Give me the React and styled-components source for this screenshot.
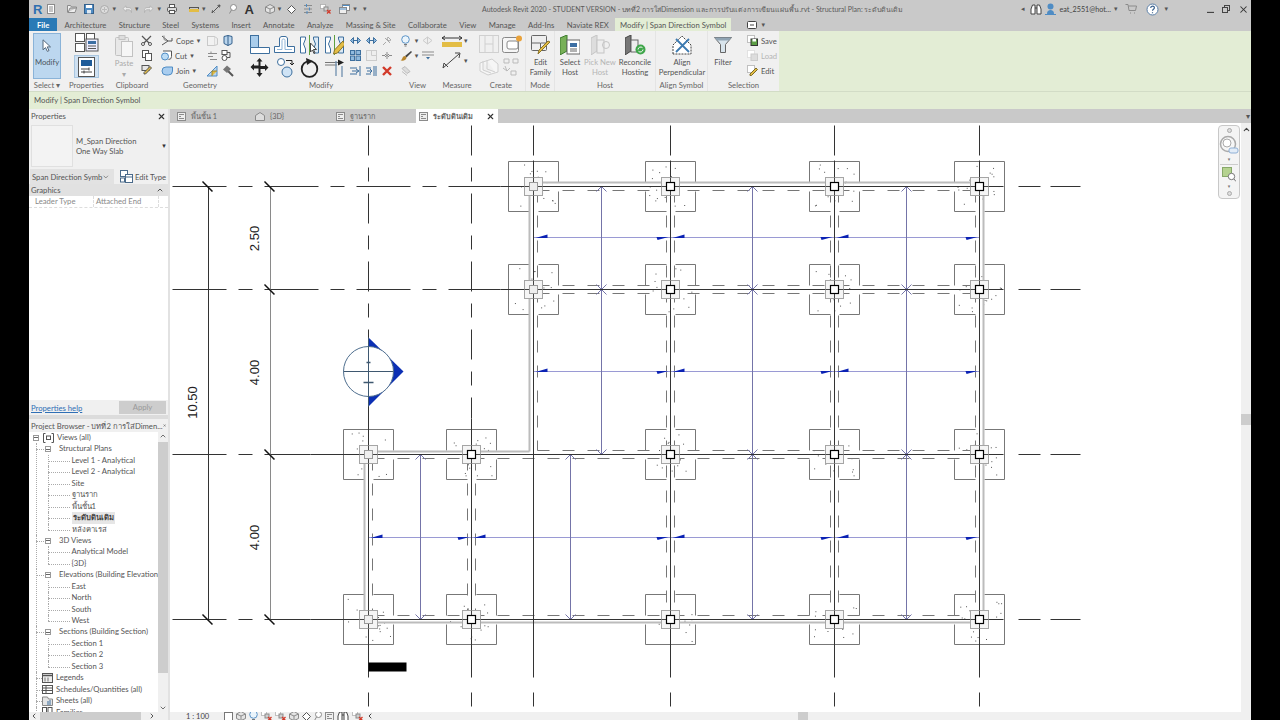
import React from 'react';
import styled, { createGlobalStyle } from 'styled-components';
import { X, ChevronUp, ChevronDown, ChevronLeft, ChevronRight } from 'lucide-react';

const Global = createGlobalStyle`
  html, body { margin: 0; background: #000; }
  * { box-sizing: border-box; }
  body { font-family: Lato, "Open Sans", "Noto Sans", sans-serif; color: #555; }
`;

const Page = styled.div`
  width: 1280px;
  height: 720px;
  background: #000;
  display: flex;
  justify-content: center;
  overflow: hidden;
`;
const Win = styled.div`
  width: 1222px;
  height: 720px;
  display: flex;
  flex-direction: column;
  background: #c9c9c9;
  font-size: 7.7px;
`;

/* ---------- title bar ---------- */
const TitleBar = styled.div`
  height: 18px;
  display: flex;
  align-items: center;
  flex: none;
`;
const Qat = styled.div`
  width: 453px;
  padding-left: 4px;
  display: flex;
  align-items: center;
  flex: none;
`;
const QatItem = styled.span`
  margin-left: ${p => p.$ml || 0}px;
  display: flex;
  align-items: center;
  line-height: 1;
`;
const RLogo = styled.span`
  font: 700 13px "Liberation Sans", sans-serif;
  color: ${p => p.$c || '#2f6fb0'};
`;
const Caret = styled.span`
  font: 7px "DejaVu Sans", sans-serif;
  color: ${p => p.$c || '#555'};
  margin-left: ${p => p.$ml || 0}px;
`;
const Title = styled.div`
  color: #5a5a5a;
  white-space: nowrap;
  font-size: 7px;
`;
const UserArea = styled.div`
  margin-left: auto;
  display: flex;
  align-items: center;
  gap: 3px;
  color: #444;
  padding-right: 2px;
`;
const UserName = styled.span`
  font-size: 7.2px;
  white-space: nowrap;
`;
const WinBtns = styled.div`
  display: flex;
  align-items: center;
  gap: 8px;
  margin-left: 36px;
`;

/* ---------- ribbon ---------- */
const TabBar = styled.div`
  height: 13px;
  display: flex;
  align-items: stretch;
  flex: none;
`;
const RTab = styled.div`
  padding: 0 ${p => p.$px ?? 6.2}px;
  margin-right: ${p => p.$mr ?? 0}px;
  display: flex;
  align-items: center;
  white-space: nowrap;
  color: ${p => (p.$file ? '#fff' : '#555')};
  background: ${p => (p.$file ? '#2a7ab6' : p.$active ? '#e3edd5' : 'transparent')};
  font-weight: ${p => (p.$file ? 700 : 400)};
`;
const Ribbon = styled.div`
  height: 61px;
  flex: none;
  display: flex;
  background: #e3edd5;
  border-bottom: 1px solid #d2dcc6;
`;
const Panel = styled.div`
  width: ${p => p.$w}px;
  height: 60px;
  background: #f0f0f0;
  display: flex;
  flex-direction: column;
  border-right: ${p => (p.$sep ? '1px solid #e4e4e4' : 'none')};
`;
const PanelBody = styled.div`
  height: 48px;
  padding: 2px 0 0 0;
  display: flex;
  gap: ${p => p.$gap || 0}px;
  flex: none;
`;
const PanelLabel = styled.div`
  height: 12px;
  line-height: 13px;
  text-align: center;
  white-space: nowrap;
  color: #666;
`;
const ModifyBtn = styled.div`
  width: 28px;
  height: 46px;
  margin-left: 4px;
  background: #bcd7ef;
  border: 1px solid #8ab3d8;
  display: flex;
  flex-direction: column;
  align-items: center;
  gap: 5px;
  padding-top: 5px;
  color: #4b5560;
`;
const PropsCol = styled.div`
  display: flex;
  flex-direction: column;
  align-items: center;
  gap: 3px;
  width: 100%;
`;
const PropsActive = styled.div`
  width: 25px;
  height: 23px;
  background: #cfe1f2;
  border: 1px solid #a9c6e0;
  display: flex;
  align-items: center;
  justify-content: center;
`;
const PasteBtn = styled.div`
  width: 22px;
  margin: 2px 0 0 5px;
  display: flex;
  flex-direction: column;
  align-items: center;
  gap: 2px;
  color: #aaa;
  line-height: 9px;
`;
const SmallGrid = styled.div`
  display: grid;
  grid-template-columns: repeat(${p => p.$cols}, ${p => p.$cw || 15}px);
  grid-auto-rows: 15px;
  align-items: center;
  justify-items: center;
  margin-left: ${p => p.$ml || 0}px;
`;
const GeomRow = styled.div`
  display: flex;
  align-items: center;
  gap: 3px;
  height: 15px;
  color: #555;
  white-space: nowrap;
`;
const GeomCol = styled.div`
  display: flex;
  flex-direction: column;
  width: 43px;
  margin-left: 5px;
  flex: none;
`;
const BigGrid = styled.div`
  display: grid;
  grid-template-columns: repeat(4, 25px);
  grid-template-rows: 23px 23px;
  align-items: center;
  justify-items: center;
  margin-left: 3px;
`;
const BigStack = styled.div`
  display: flex;
  flex-direction: column;
  gap: 5px;
  margin: 2px 0 0 ${p => p.$ml || 2}px;
`;
const WithCaret = styled.div`
  display: flex;
  align-items: center;
  gap: 2px;
`;
const BigTool = styled.div`
  width: ${p => p.$w}px;
  display: flex;
  flex-direction: column;
  align-items: center;
  text-align: center;
  line-height: 10px;
  color: ${p => (p.$off ? '#b5b5b5' : '#555')};
  white-space: nowrap;
  flex: none;
`;
const BigIconBox = styled.div`
  height: 24px;
  display: flex;
  align-items: center;
`;
const SelCol = styled.div`
  display: flex;
  flex-direction: column;
  margin-left: 9px;
`;
const SelRow = styled.div`
  display: flex;
  align-items: center;
  gap: 3px;
  height: 15px;
  color: ${p => (p.$off ? '#b5b5b5' : '#555')};
`;
const ContextBar = styled.div`
  height: 17px;
  flex: none;
  background: #e3edd5;
  display: flex;
  align-items: center;
  padding: 0 0 1px 5px;
  color: #555;
`;

/* ---------- main area ---------- */
const Main = styled.div`
  flex: 1;
  min-height: 0;
  display: flex;
  gap: 2px;
  background: #e2e2e2;
`;
const Side = styled.div`
  width: 139px;
  flex: none;
  display: flex;
  flex-direction: column;
  background: #f0f0f0;
  overflow: hidden;
`;
const PaneHeader = styled.div`
  height: ${p => p.$h || 14}px;
  display: flex;
  align-items: center;
  justify-content: space-between;
  padding: 0 2px;
  flex: none;
  white-space: nowrap;
  color: #555;
  background: #f0f0f0;
`;
const TypeBox = styled.div`
  height: 46px;
  display: flex;
  align-items: center;
  padding-left: 2px;
  gap: 3px;
  line-height: 10px;
`;
const Preview = styled.div`
  width: 42px;
  height: 42px;
  border: 1px solid #e0e0e0;
  background: #f3f3f3;
  flex: none;
`;
const TypeName = styled.div`
  flex: 1;
`;
const SelectRow = styled.div`
  height: 15px;
  display: flex;
  align-items: center;
  gap: 2px;
  padding-left: 1px;
  white-space: nowrap;
`;
const SelectBox = styled.div`
  width: 84px;
  height: 15px;
  margin-right: 4px;
  background: #e2e2e2;
  padding: 0 4px 0 2px;
  display: flex;
  align-items: center;
  justify-content: space-between;
  white-space: nowrap;
`;
const GroupHead = styled.div`
  height: 12px;
  background: #e1e1e1;
  display: flex;
  align-items: center;
  justify-content: space-between;
  padding: 0 4px 0 2px;
  color: #555;
`;
const ParamRow = styled.div`
  height: 12px;
  display: grid;
  grid-template-columns: 65px 65px 9px;
  background: #fff;
  border-bottom: 1px dashed #ddd;
  color: #888;
`;
const ParamCell = styled.span`
  padding-left: ${p => p.$pl}px;
  border-right: 1px dashed #ddd;
  line-height: 11px;
`;
const PropsBlank = styled.div`
  height: 192px;
  background: #fff;
`;
const ApplyRow = styled.div`
  height: 15px;
  display: flex;
  align-items: center;
  justify-content: space-between;
  padding: 0 2px;
`;
const HelpLink = styled.a`
  color: #2f6fb5;
  text-decoration: underline;
`;
const ApplyBtn = styled.div`
  width: 47px;
  height: 13px;
  background: #cdcdcd;
  color: #999;
  text-align: center;
  line-height: 12px;
`;
const BrowserGap = styled.div`
  height: 4px;
  background: #dcdcdc;
  flex: none;
`;
const BrowserBody = styled.div`
  flex: 1;
  min-height: 0;
  display: flex;
  background: #fff;
  position: relative;
  overflow: hidden;
`;
const TreeWrap = styled.div`
  width: 129px;
  padding-left: 2px;
  overflow: hidden;
  flex: none;
`;
const Ul = styled.ul`
  list-style: none;
  margin: 0 0 0 ${p => p.$ml}px;
  padding: 0;
`;
const Li = styled.li`
  position: relative;
  color: #555;
  &::before {
    content: '';
    position: absolute;
    left: 0;
    top: 0;
    height: 100%;
    border-left: 1px dotted #aaa;
  }
  &:last-child::before { height: 6px; }
`;
const Row = styled.div`
  height: 11.45px;
  line-height: 11.45px;
  display: flex;
  align-items: center;
  white-space: nowrap;
  position: relative;
  &::before {
    content: '';
    position: absolute;
    left: 0;
    top: 6px;
    width: ${p => p.$stub}px;
    border-top: 1px dotted #aaa;
  }
`;
const Expander = styled.span`
  width: 6px;
  height: 6px;
  margin: 0 ${p => p.$mr ?? 8}px 0 ${p => p.$ml}px;
  border: 1px solid #999;
  background: #fff;
  position: relative;
  flex: none;
  z-index: 1;
  &::after {
    content: '';
    position: absolute;
    left: 0;
    top: 1.5px;
    width: 4px;
    border-top: 1px solid #666;
  }
`;
const RowIcon = styled.span`
  margin: 0 3px 0 ${p => p.$ml}px;
  display: flex;
  flex: none;
  z-index: 1;
  background: #fff;
`;
const RowText = styled.span`
  margin-left: ${p => p.$ml || 0}px;
  padding: 0 ${p => (p.$sel ? 1 : 0)}px;
  font-weight: ${p => (p.$sel ? 700 : 400)};
  background: ${p => (p.$sel ? '#e6e6e6' : 'transparent')};
  color: ${p => (p.$sel ? '#444' : '#555')};
`;
const VScroll = styled.div`
  width: 10px;
  background: #f0f0f0;
  display: flex;
  flex-direction: column;
  align-items: center;
  color: #555;
  flex: none;
`;
const VThumb = styled.div`
  width: 10px;
  height: ${p => p.$h}px;
  margin: ${p => p.$mt}px 0 auto;
  background: #cdcdcd;
  flex: none;
`;
const HScroll = styled.div`
  height: 8px;
  flex: none;
  background: #f0f0f0;
  display: flex;
  align-items: center;
  padding: 0 12px 0 1px;
`;
const HThumb = styled.div`
  width: 101px;
  height: 8px;
  margin: 0 auto 0 2px;
  background: #cdcdcd;
`;

const Content = styled.div`
  flex: 1;
  min-width: 0;
  display: flex;
  flex-direction: column;
`;
const ViewTabs = styled.div`
  height: 14px;
  flex: none;
  display: flex;
  padding-left: 1px;
  background: #c9c9c9;
  position: relative;
`;
const ViewTab = styled.div`
  width: ${p => p.$w}px;
  margin-left: ${p => p.$ml || 0}px;
  padding-left: ${p => (p.$active ? 3 : 6)}px;
  display: flex;
  align-items: center;
  gap: 5px;
  background: ${p => (p.$active ? '#fff' : 'transparent')};
  color: #666;
  white-space: nowrap;
  font-size: 7.3px;
  font-weight: ${p => (p.$active ? 700 : 400)};
`;
const TabClose = styled.span`
  margin-left: auto;
  margin-right: 3px;
  display: flex;
  color: #333;
`;
const TabsMenu = styled.span`
  position: absolute;
  right: 1px;
  top: 3px;
  font: 8px "DejaVu Sans", sans-serif;
  color: #555;
`;
const CanvasRow = styled.div`
  flex: 1;
  min-height: 0;
  display: flex;
`;
const Canvas = styled.div`
  flex: 1;
  background: #fff;
  position: relative;
  overflow: hidden;
`;
const PlanSvg = styled.svg`
  display: block;
`;
const NavBar = styled.div`
  position: absolute;
  top: 2px;
  right: 1px;
  width: 22px;
  height: 74px;
  border: 1px solid #c8c8c8;
  border-radius: 4px;
  background: #f4f4f4;
  display: flex;
  flex-direction: column;
  align-items: center;
  justify-content: space-between;
  padding: 2px 0;
`;
const NavDot = styled.span`
  width: 5px;
  height: 5px;
  border-radius: 50%;
  border: 1px solid #aaa;
  background: #ddd;
`;
const NavDivider = styled.span`
  width: 18px;
  border-top: 1px solid #ccc;
`;
const NavCaret = styled.span`
  font: 5px "DejaVu Sans", sans-serif;
  color: #777;
  line-height: 5px;
`;
const RightScroll = styled.div`
  width: 10px;
  background: #f0f0f0;
  display: flex;
  flex-direction: column;
  align-items: center;
  color: #444;
  padding-top: 2px;
`;
const RightThumb = styled.div`
  width: 10px;
  height: 11px;
  background: #cdcdcd;
  margin-top: 280px;
`;
const StatusBar = styled.div`
  height: 8px;
  flex: none;
  background: #f0f0f0;
  display: flex;
  align-items: center;
  overflow: hidden;
  position: relative;
  color: #444;
  font-size: 7.5px;
`;
const Scale = styled.span`
  margin: 0 15px 0 16px;
  white-space: nowrap;
`;
const StatusIcons = styled.div`
  display: flex;
  align-items: center;
  gap: 3px;
  height: 8px;
`;
const StatusThumb = styled.span`
  position: absolute;
  left: 628px;
  top: 0;
  width: 10px;
  height: 8px;
  background: #cdcdcd;
`;

/* ---------- icons ---------- */
const blue = '#4f8cc4', grey = '#8b8b8b', dark = '#555', yel = '#e3bd45', pale = '#c9c9c9', red = '#d23a2a', line = '#3d6f9e';

const icons = {
  doc: [8, 10, <><rect x=".5" y=".5" width="7" height="9" fill="#fff" stroke={grey} /><path d="M2 3h4M2 5h4M2 7h4" stroke={grey} /></>],
  folder: [10, 8, <path d="M.5 7.5v-7h3l1 1.5h5v1H3l-2 4.5h7l1.5-4.5" fill="#eee" stroke={grey} />],
  save: [10, 10, <><rect x=".5" y=".5" width="9" height="9" fill={blue} stroke="#35618c" /><rect x="2" y="1" width="6" height="3" fill="#fff" /><rect x="3" y="6" width="4" height="3.5" fill="#dfe8f0" /></>],
  sync: [9, 9, <><circle cx="4.5" cy="4.5" r="4" fill="#ddd" stroke="#aaa" /><path d="M2 4.5h5M4.5 2v5" stroke="#bbb" /></>],
  undo: [10, 8, <path d="M1 3.5L4 .8v1.8h3c2 0 2.5 1.5 2.5 3v2c-.5-2-1.500-2.800-2.500-2.800H4v1.800z" fill="#eee" stroke="#b5b5b5" />],
  redo: [10, 8, <path d="M9 3.500L6 .8v1.800H3C1 2.600.5 4.100.5 5.600v2C1 5.600 2 4.800 3 4.800h3v1.800z" fill="#eee" stroke="#b5b5b5" />],
  print: [10, 10, <><rect x="2.500" y=".5" width="5" height="3" fill="#fff" stroke={dark} /><rect x=".5" y="3.500" width="9" height="4" rx="1" fill="#ddd" stroke={dark} /><rect x="2.500" y="6.500" width="5" height="3" fill="#fff" stroke={dark} /></>],
  dim: [10, 7, <><rect y="3" width="10" height="3" fill={yel} /><path d="M.5 1v2M9.500 1v2M1 1.500h8" stroke={dark} /></>],
  diag: [10, 10, <><path d="M1 9L9 1" stroke={dark} /><path d="M6.500 1.500L9 1l-.5 2.500M1 9l.5-2.500L3.500 8.500" fill="none" stroke={dark} /></>],
  tag: [8, 10, <><circle cx="4.500" cy="3.500" r="3" fill="#fff" stroke={grey} /><path d="M2.500 6L.5 9.500" stroke={grey} /></>],
  cube: [10, 10, <><path d="M5 .5l4.500 2.500v4.500L5 9.500.5 7.500V3z" fill="#e4e4e4" stroke={grey} /><path d="M.5 3L5 5l4.500-2M5 5v4.500" fill="none" stroke={grey} /></>],
  eye: [9, 9, <path d="M4.500 .5l4 4-4 4-4-4z" fill="#fff" stroke={dark} />],
  bars: [8, 10, <><path d="M0 1.500h8M0 5h8M0 8.500h8" stroke={grey} /><path d="M2.500 0v3M5.500 3.500v3M3 7v3" stroke={blue} /></>],
  hide: [11, 10, <><rect x=".5" y=".5" width="5" height="4" fill="#fff" stroke={grey} strokeDasharray="1 1" /><rect x="4" y="3" width="4" height="4" fill="#cfcfcf" stroke={grey} /><path d="M7 6l3.500 3.500M10.500 6L7 9.500" stroke={red} strokeWidth="1.300" /></>],
  windows: [11, 10, <><rect x="3.500" y=".5" width="7" height="6" fill="#fff" stroke={grey} /><rect x=".5" y="3.500" width="7" height="6" fill="#eee" stroke={grey} /><path d="M.5 5h7M3.500 1.500h7" stroke={blue} /></>],
  binoc: [12, 11, <path d="M1 10V5l1.500-4H5v9zM11 10V5L9.500 1H7v9zM5 4h2" fill="#fff" stroke="#444" />],
  user: [11, 12, <><circle cx="5.500" cy="3.500" r="3" fill={blue} /><path d="M2 11c0-3 1.500-4 3.500-4S9 8 9 11z" fill={blue} /><path d="M0 11.500h11" stroke={blue} /></>],
  cart: [12, 10, <path d="M.5 .5h2.500l1 6h6.500l1-4.500H3.500M5 9h1M9 9h1" fill="none" stroke={grey} />],
  help: [13, 13, <><circle cx="6.500" cy="6.500" r="5.500" fill="#fff" stroke="#5a7fa8" /><path d="M4.700 5c0-2.400 3.700-2.400 3.700-.2 0 1.500-1.900 1.500-1.900 3M6.500 9.300v1" fill="none" stroke="#385f8c" strokeWidth="1.200" /></>],
  dash: [7, 7, <path d="M0 6.500h7" stroke="#444" strokeWidth="1.300" />],
  restore: [8, 8, <><rect x="2.500" y=".5" width="5" height="5" fill="none" stroke="#444" /><rect x=".5" y="2.500" width="5" height="5" fill="#c9c9c9" stroke="#444" /></>],
  cursor: [10, 13, <path d="M1 .8v10l2.500-2.200 1.800 3.800 1.700-.8-1.800-3.700h3.300z" fill="#fff" stroke="#55697d" />],
  typeProps: [24, 19, <><rect x=".5" y=".5" width="9" height="8" fill="#fff" stroke={dark} /><rect x="11.500" y=".5" width="8" height="8" fill="#fff" stroke={dark} /><rect x=".5" y="10.500" width="9" height="8" fill="#fff" stroke={dark} /><rect x="11" y="6" width="12" height="12" fill="#eef" stroke={dark} /><rect x="13" y="8" width="8" height="3" fill="#3c6ea3" /><path d="M13 13h8M13 15.500h8" stroke={dark} /></>],
  props: [17, 20, <><rect x=".5" y=".5" width="16" height="19" fill="#fff" stroke={dark} /><rect x="3" y="3" width="11" height="6" fill="#1f5c99" /><path d="M3 12h8M3 15h11" stroke="#444" /><path d="M11 10.500v3M6 13.500v3" stroke="#444" /></>],
  paste: [18, 22, <><rect x=".5" y="2.500" width="13" height="18" rx="1" fill="#e8e8e8" stroke="#c2c2c2" /><rect x="6.500" y="6.500" width="11" height="15" fill="#f6f6f6" stroke="#c2c2c2" /><rect x="4" y=".5" width="6" height="4" fill="#ddd" stroke="#c2c2c2" /></>],
  scissor: [11, 11, <><path d="M1 1l9 9M10 1L1 10" stroke={dark} strokeWidth="1.200" /><circle cx="2" cy="9" r="1.500" fill="#fff" stroke={dark} /><circle cx="9" cy="9" r="1.500" fill="#fff" stroke={dark} /></>],
  copy: [10, 11, <><rect x=".5" y=".5" width="6" height="7" fill="#fff" stroke={dark} /><rect x="3.500" y="3.500" width="6" height="7" fill="#fff" stroke={dark} /></>],
  match: [11, 11, <><rect x="1" y=".5" width="7" height="5" fill="#e6e6e6" stroke={dark} /><path d="M3 7.500l6-6 1.500 1.500-6 6H3z" fill={yel} stroke={dark} /></>],
  cope: [12, 11, <><path d="M1 1l6 5M1 10l6-4M7 6h4V3" fill="none" stroke={dark} /><path d="M3 .5v4l3 1.500" fill="none" stroke={grey} /></>],
  cut: [11, 11, <><path d="M2 1h8.500v5.500a3 3 0 0 1-3 3" fill="#fff" stroke={dark} /><circle cx="4" cy="6.500" r="3.500" fill="#bcdcf5" stroke={blue} /></>],
  join: [12, 11, <path d="M1 6a4 4 0 0 1 4-4h6.500v4a4 4 0 0 1-4 4H5a4 4 0 0 1-4-4z" fill="#a9cdef" stroke={blue} />],
  boxes: [11, 11, <><rect x=".5" y="1.500" width="7" height="9" fill="#f2f2f2" stroke={pale} /><path d="M7.500 1.500l3 2v6l-3 1" fill="#eee" stroke={pale} /></>],
  wallJoin: [10, 11, <><path d="M1 1.500L5 .5l4 1v7l-4 2-4-2z" fill="#b9d4ec" stroke="#35618c" /><path d="M5 .5v10" stroke="#35618c" /></>],
  steps: [11, 10, <path d="M4 .5v2M1 2.500h9M1 5.500h5M3 8.500h7" stroke={grey} />],
  links: [14, 11, <><rect x="1" y=".5" width="5" height="4" fill="#fff" stroke={dark} /><circle cx="3.500" cy="8" r="2.500" fill="#fff" stroke={dark} /><path d="M6 2.500h3v5H6" fill="none" stroke={dark} /></>],
  wallCut: [12, 12, <><path d="M1 11l10-10v10z" fill="#bcd6ef" stroke={blue} /><path d="M6 11V6h5" fill={yel} stroke="#9c862f" /></>],
  hammer: [12, 12, <><path d="M11 11L5.500 5.500" stroke="#555" strokeWidth="2" /><path d="M1 4.500L5 .5l4 3.500-4 4z" fill="#777" /></>],
  align: [20, 19, <><rect x=".5" y=".5" width="8" height="12" fill="#a9cdec" stroke={line} /><path d="M.5 12.500h19v6H.5z" fill="#fff" stroke={line} /></>],
  offset: [21, 17, <><path d="M.5 16.500v-6h5V3C5.500 1.500 6.500.5 8 .5h3c1.500 0 2.500 1 2.500 2.500v7.500h7v6z" fill="#fff" stroke={line} /><path d="M3 13.500h5V4.500c0-1 .5-1.500 1.500-1.500S11 3.500 11 4.500v9h7" fill="none" stroke="#8fb5d8" /></>],
  mirror1: [19, 20, <><path d="M.5 2h5v2l-2 5 2 5v4h-5z" fill="#fff" stroke={line} /><path d="M9.500 0v20" stroke="#5ea03e" /><path d="M18.500 2h-5v2l2 5-2 5v4h5z" fill="#dce9f5" stroke={line} /><path d="M10.500 8v9l2-2 1.500 3.500 1-.5-1.500-3.500h3z" fill="#fff" stroke="#444" /></>],
  mirror2: [19, 20, <><path d="M.5 2h5v2l-2 5 2 5v4h-5z" fill="#fff" stroke={line} /><path d="M9.500 0v20" stroke="#5ea03e" /><path d="M18.500 2h-5v2l2 5-2 5v4h5z" fill="#dce9f5" stroke={line} /><path d="M18 6L9.500 15l-1 4 4-1L20 9.500z" fill={yel} stroke="#8b7426" /></>],
  move: [19, 19, <path d="M9.500 0l3 3.500h-2v4.500h4.500v-2l3.500 3.500-3.500 3.500v-2h-4.500V15h2l-3 4-3-4h2v-4.500H4v2L.5 9 4 5.500v2h4.500V3.500h-2z" fill="#222" />],
  copyMove: [18, 20, <><circle cx="5" cy="4" r="3.500" fill="#fff" stroke={line} /><circle cx="11" cy="14" r="5" fill="#cfe3f5" stroke={line} /><path d="M10 2.500h6V7M14 5l2 2 2-2" fill="none" stroke="#222" /></>],
  rotate: [19, 20, <><circle cx="9.500" cy="11" r="7.800" fill="none" stroke="#222" strokeWidth="1.800" /><path d="M6 0l7 3-6 4z" fill="#222" /></>],
  trim: [19, 19, <><path d="M0 7h12M0 4.500h15" stroke="#777" /><path d="M11 3v15M17 8v11" stroke="#6f8fae" strokeWidth="1.300" /><path d="M13 1.500l6 3-6 3z" fill="#222" /></>],
  mini1: [11, 7, <><path d="M.5 3.500L3.500.5v6zM10.500 3.500L7.500.5v6z" fill="#8fb9de" stroke={line} /><path d="M4 3.500h3" stroke={line} /></>],
  mini2: [11, 11, <><rect x=".5" y=".5" width="4" height="4" fill="#8fb9de" stroke={line} /><rect x="6" y=".5" width="4.500" height="4" fill="#8fb9de" stroke={line} /><rect x=".5" y="6" width="4" height="4.500" fill="#8fb9de" stroke={line} /><rect x="6" y="6" width="4.500" height="4.500" fill="#8fb9de" stroke={line} /></>],
  miniOff: [11, 11, <><rect x=".5" y=".5" width="10" height="10" fill="#eee" stroke="#ccc" /><path d="M5.500 .5v5h5" fill="none" stroke="#ccc" /></>],
  miniPin: [10, 10, <path d="M1 9l3-3M3 2l5 5M6 1l3 3-2 1-2-2z" fill="none" stroke="#aaa" />],
  miniSplit: [10, 9, <path d="M0 4.500h3M7 4.500h3M5 1v7M3 3l1.500 1.500L3 6M7 3L5.500 4.500 7 6" fill="none" stroke={grey} />],
  miniArr: [11, 10, <path d="M0 2h7M0 8h7M2 5h6M6 3l3 2-3 2M10 0v10" fill="none" stroke={line} />],
  miniArr2: [11, 10, <path d="M0 2h5M0 8h5M1 5h5M4 3l2 2-2 2M8 0v10M10 0v10" fill="none" stroke={line} />],
  miniX: [10, 10, <path d="M1 1l8 8M9 1L1 9" stroke={red} strokeWidth="2.400" />],
  bulb: [9, 12, <><circle cx="4.500" cy="4.500" r="3.800" fill="#eaf4fb" stroke="#5b93c7" /><path d="M3 9.500h3M3.500 11h2" stroke="#777" /></>],
  lines: [12, 9, <><path d="M0 1h12M0 4h12" stroke={grey} /><path d="M4 6l2 2.500L8 6z" fill={line} /></>],
  brush: [12, 11, <><path d="M11 1L5 6l1.500 1.500L12 2z" fill="#444" /><path d="M5 6C2 6 3 9 .5 10.500 4 11 6.500 10 6.500 7.500z" fill="#b8862c" /></>],
  pile: [10, 10, <path d="M1 2.500l3-2 5 5-3 2zM1 5.500l5 4" fill="#ddd" stroke="#bbb" />],
  eyeOff: [11, 9, <path d="M1 4.500L5.500 1 10 4.500 5.500 8z M5.500 1v7" fill="#eee" stroke="#ccc" />],
  ruler: [20, 12, <><rect x="0" y="7" width="20" height="5" fill={yel} /><path d="M0 3h20M0 3l3-2M0 3l3 2M20 3l-3-2M20 3l-3 2" fill="none" stroke="#333" /></>],
  measure: [20, 17, <><path d="M1 16L17 2" stroke="#444" /><path d="M13 1h5l-1 5M1 16l1-5 4 4" fill="none" stroke="#444" /></>],
  createA: [20, 18, <><rect x=".5" y=".5" width="19" height="17" fill="none" stroke="#d0d0d0" /><path d="M6 .5v17M14 .5v17M6 9h8" stroke="#d0d0d0" /></>],
  createB: [20, 18, <><rect x=".5" y="2.500" width="16" height="15" rx="2" fill="#f6f6f6" stroke="#888" /><rect x="5" y="6" width="11" height="8" rx="2" fill="#fff" stroke="#888" /><circle cx="17" cy="3.500" r="3" fill="#e9a23a" /></>],
  createC: [20, 18, <path d="M1 5l12-4 6 5v8l-10 3-8-4zM4 3v9l8 3M8 2v9l8 3" fill="#f6f6f6" stroke="#cfcfcf" />],
  createD: [17, 18, <path d="M2 1h5v4H2zM11 1h5v4h-5zM3 8l2 5M1 10l4 3 3-3M9 13h5v4H9z" fill="none" stroke="#bbb" />],
  editFam: [20, 20, <><rect x=".5" y=".5" width="15" height="15" rx="1" fill="#eee" stroke="#666" /><path d="M.5 8h9v7M15 8H10" fill="none" stroke="#666" /><path d="M19 7L10 16l-3 3 1-4 9-9z" fill={yel} stroke="#8b7426" /></>],
  selHost: [20, 20, <><path d="M0 3l7-3v16l-7 4z" fill="#78b058" stroke="#3a7a2b" /><rect x="7" y="5" width="13" height="14" fill="#fff" stroke="#666" /><rect x="10" y="8" width="7" height="4" fill="#3c6ea3" /><path d="M10 14h7M10 16h7" stroke="#666" /></>],
  pickHost: [19, 20, <><path d="M0 3l6-3v16l-6 4z" fill="#ddd" stroke="#c4c4c4" /><rect x="6" y="5" width="7" height="13" fill="#eee" stroke="#c4c4c4" /><circle cx="15" cy="10" r="3.500" fill="none" stroke="#c4c4c4" /></>],
  reconcile: [21, 20, <><path d="M0 3l6-3v16l-6 4z" fill="#777" stroke="#444" /><rect x="6" y="5" width="7" height="12" fill="#eee" stroke="#666" /><circle cx="15.500" cy="14.500" r="5" fill="#3fa64a" /><path d="M13 14.500a2.700 2.700 0 0 1 4.500-1.800M18 14.500a2.700 2.700 0 0 1-4.500 1.800" fill="none" stroke="#fff" /></>],
  alignPerp: [20, 20, <><path d="M1 19V10L10 1l9 9v9z" fill="#fff" stroke="#444" strokeDasharray="2 1" /><path d="M4 4l13 13M4 17L17 4" stroke="#3d7ab0" strokeWidth="1.800" /></>],
  filter: [18, 16, <><path d="M.5 .5h17l-6 7v8h-5v-8z" fill="#d8e4ec" stroke="#666" /><path d="M.5 .5h17l-2.500 3H3z" fill="#90a4b3" /></>],
  selSave: [11, 11, <><rect x=".5" y=".5" width="7" height="7" fill="#fff" stroke="#888" strokeDasharray="1 1" /><rect x="4" y="4" width="6.500" height="6.500" fill="#5c9e45" stroke="#333" /><rect x="5.500" y="4" width="3.500" height="2.500" fill="#fff" /></>],
  selLoad: [11, 11, <><rect x=".5" y=".5" width="7" height="7" fill="#fff" stroke="#ccc" strokeDasharray="1 1" /><rect x="4" y="4" width="6.500" height="6.500" fill="#ddd" stroke="#ccc" /></>],
  selEdit: [11, 11, <><rect x=".5" y=".5" width="7" height="7" fill="#fff" stroke="#888" strokeDasharray="1 1" /><path d="M3 9l6-6 1.500 1.500-6 6H3z" fill={yel} stroke="#7d6a25" /></>],
  navWheel: [20, 20, <><circle cx="9" cy="9" r="7.500" fill="#f6f6f6" stroke="#aaa" strokeWidth="1.500" /><circle cx="8" cy="8" r="4" fill="#fff" stroke="#aaa" /><rect x="10" y="13" width="9" height="5" rx="2" fill="#e2ecf7" stroke="#8fb0d5" /></>],
  navZoom: [14, 15, <><rect x=".5" y=".5" width="9" height="9" fill="#b4d28f" stroke="#88a86a" /><circle cx="9.500" cy="9.500" r="3.200" fill="#fff" stroke="#777" /><path d="M12 12l2 2.500" stroke="#777" /></>],
  plan: [9, 9, <><rect x=".5" y=".5" width="8" height="8" fill="#eee" stroke={grey} /><path d="M2 2.500h5M2 4.500h2M2 6.500h5" stroke={grey} /></>],
  house: [10, 9, <path d="M5 .5l4.500 3v5h-9v-5z" fill="#ddd" stroke={grey} />],
  views: [11, 10, <><path d="M2.500 .5H.5v9h2M8.500 .5h2v9h-2" fill="none" stroke="#555" /><rect x="3.500" y="3" width="4" height="3.500" fill="none" stroke="#555" /></>],
  legend: [11, 10, <><rect x=".5" y=".5" width="10" height="9" fill="#eee" stroke="#555" /><path d="M.5 2.500h10" stroke="#555" strokeWidth="1.500" /><path d="M3 4.500v4M6 4.500v4" stroke="#777" /></>],
  sched: [11, 9, <><rect x=".5" y=".5" width="10" height="8" fill="#fff" stroke="#555" /><path d="M.5 3h10M.5 5.500h10M4 .5v8" stroke="#555" /></>],
  sheets: [11, 10, <><path d="M.5 1h5l1 2h4v6.500H.5z" fill="#e4e4e4" stroke="#888" /><path d="M6 5v4M8 4v5" stroke={line} /></>],
  family: [11, 10, <><rect x=".5" y=".5" width="4" height="7" fill="none" stroke="#555" /><rect x="6" y=".5" width="4" height="7" fill="none" stroke="#555" /></>],
  editType: [13, 13, <><rect x=".5" y=".5" width="7" height="6" fill="#fff" stroke="#4a6a8a" /><rect x="5.500" y="4.500" width="7" height="8" fill="#fff" stroke="#4a6a8a" /><rect x=".5" y="8" width="4" height="4" fill="#fff" stroke="#4a6a8a" /><path d="M5.500 7h7" stroke="#4a6a8a" /></>],
  ctx: [13, 8, <><rect x=".5" y=".5" width="9" height="7" rx="1" fill="#fff" stroke="#444" /><path d="M3 4h4" stroke="#444" /></>],
  thin: [9, 9, <rect x=".5" y=".5" width="8" height="8" fill="#fff" stroke="#777" />],
};

const Icon = ({ n, s = 1 }) => {
  const [w, h, body] = icons[n];
  return <svg width={w * s} height={h * s} viewBox={`0 0 ${w} ${h}`} style={{ display: 'block', flex: 'none' }}>{body}</svg>;
};

/* ---------- plan data ---------- */
const colsTop = [533, 670, 834, 979];
const colsLow = [368, 471, 670, 834, 979];
const footings = [
  ...colsTop.map(x => [x, 186]),
  ...colsTop.map(x => [x, 289]),
  ...colsLow.map(x => [x, 454]),
  ...colsLow.map(x => [x, 619]),
];
const greyPier = x => x === 368 || x === 533;

const rand = seed => {
  const v = Math.sin(seed * 12.9898) * 43758.5453;
  return v - Math.floor(v);
};

function Footing({ x, y, i }) {
  const l = x - 25, r = x + 25, t = y - 25, b = y + 25;
  const openTop = y !== 186 && !(y === 454 && x < 500);
  const openBot = y !== 619;
  const openLeft = x !== 368 && x !== 533;
  const openRight = x !== 979;
  const d = [
    openLeft ? `M${l} ${t}V${y - 4}M${l} ${y + 5}V${b}` : `M${l} ${t}V${b}`,
    openRight ? `M${r} ${t}V${y - 4}M${r} ${y + 5}V${b}` : `M${r} ${t}V${b}`,
    openTop ? `M${l} ${t}H${x - 4}M${x + 5} ${t}H${r}` : `M${l} ${t}H${r}`,
    openBot ? `M${l} ${b}H${x - 4}M${x + 5} ${b}H${r}` : `M${l} ${b}H${r}`,
  ].join('');
  const dots = Array.from({ length: 15 }, (_, k) => [
    l + 3 + rand(i * 31 + k) * 44,
    t + 3 + rand(i * 17 + k * 7 + 3) * 44,
  ]);
  return (
    <g>
      <path d={d} fill="none" stroke="#777" strokeWidth="1" />
      {dots.map(([a, b2], k) => <rect key={k} x={a} y={b2} width="1" height="1" fill="#555" />)}
    </g>
  );
}

const solid = { stroke: '#bcbcbc', strokeWidth: 2, fill: 'none' };
const hidden = { stroke: '#777', strokeWidth: 1, strokeDasharray: '12 13', fill: 'none' };

// outer faces of the beams are solid, inner faces are hidden lines
const solidBeams = 'M529 182H983M983 182V622M364 622H983M364 451V622M364 451H529M529 182V451';
const hiddenBeams = [
  'M537 190H975', 'M537 285H975', 'M537 293H975', 'M537 450H975', 'M372 458H975', 'M372 615H975',
  'M537 190V450', 'M372 458V615', 'M467 458V615', 'M475 458V615',
  'M666 190V615', 'M674 190V615', 'M830 190V615', 'M838 190V615', 'M975 190V615',
].join('');

function GridH({ y, solidFrom }) {
  return (
    <g stroke="#333" strokeWidth="1" fill="none">
      <path d={`M172 ${y}H${solidFrom}`} strokeDasharray="54 12 14 12" />
      <path d={`M${solidFrom} ${y}H1003`} />
      <path d={`M1018 ${y}H1040M1050 ${y}H1080`} />
    </g>
  );
}

function GridV({ x, solidFrom }) {
  return (
    <g stroke="#333" strokeWidth="1" fill="none">
      <path d={`M${x} 125V${solidFrom}`} strokeDasharray="30 12 14 12" />
      <path d={`M${x} ${solidFrom}V677`} />
      <path d={`M${x} 692V706`} />
    </g>
  );
}

const spanRows = [
  { y: 237, from: 533, right: [533, 670, 834], left: [670, 834, 979] },
  { y: 371, from: 533, right: [533, 670, 834], left: [670, 834, 979] },
  { y: 537, from: 368, right: [368, 471, 670, 834], left: [471, 670, 834, 979] },
];
const spanCols = [
  { x: 601, from: 186, to: 454, mid: [289] },
  { x: 752, from: 186, to: 619, mid: [289, 454] },
  { x: 906, from: 186, to: 619, mid: [289, 454] },
  { x: 420, from: 454, to: 619, mid: [] },
  { x: 570, from: 454, to: 619, mid: [] },
];
const ticks = [[208, 186], [208, 619], [270, 186], [270, 289], [270, 454], [270, 619]];

function Plan() {
  return (
    <PlanSvg width="1071" height="589" viewBox="169.5 122.5 1071 589">
      {footings.map(([x, y], i) => <Footing key={i} x={x} y={y} i={i + 1} />)}

      <path d={solidBeams} {...solid} />
      <path d={hiddenBeams} {...hidden} />

      {spanRows.map(r => (
        <g key={r.y}>
          <path d={`M${r.from} ${r.y}H979`} stroke="#9a9ad4" strokeWidth="1" />
          {r.right.map(x => <polygon key={x} points={`${x + 2},${r.y + 0.5} ${x + 14},${r.y + 0.5} ${x + 14},${r.y - 3}`} fill="#0b22b4" />)}
          {r.left.map(x => <polygon key={x} points={`${x - 14},${r.y - 0.500} ${x - 2},${r.y - 0.500} ${x - 13},${r.y + 2.500}`} fill="#0b22b4" />)}
        </g>
      ))}
      {spanCols.map(c => (
        <g key={c.x} stroke="#7474a8" fill="none" strokeWidth="1">
          <path d={`M${c.x} ${c.from}V${c.to}`} />
          <path d={`M${c.x - 5} ${c.from + 5}L${c.x} ${c.from}L${c.x + 5} ${c.from + 5}`} />
          <path d={`M${c.x - 5} ${c.to - 5}L${c.x} ${c.to}L${c.x + 5} ${c.to - 5}`} />
          {c.mid.map(m => <path key={m} d={`M${c.x - 5} ${m - 5}L${c.x + 5} ${m + 5}M${c.x + 5} ${m - 5}L${c.x - 5} ${m + 5}`} />)}
        </g>
      ))}

      <GridH y={186} solidFrom={500} />
      <GridH y={289} solidFrom={500} />
      <GridH y={454} solidFrom={310} />
      <GridH y={619} solidFrom={310} />
      <GridV x={368} solidFrom={340} />
      <GridV x={471} solidFrom={418} />
      <GridV x={533} solidFrom={160} />
      <GridV x={670} solidFrom={160} />
      <GridV x={834} solidFrom={160} />
      <GridV x={979} solidFrom={160} />

      {footings.map(([x, y], i) => (
        <g key={i}>
          <rect x={x - 9} y={y - 9} width="18" height="18" fill="#f5f5f5" stroke="#a5a5a5" />
          <path d={`M${x} ${y - 9}V${y + 9}M${x - 9} ${y}H${x + 9}`} stroke="#444" strokeWidth="1" />
          <rect x={x - 4} y={y - 4} width="8" height="8" fill={greyPier(x) ? '#eee' : '#fff'} stroke={greyPier(x) ? '#999' : '#000'} strokeWidth={greyPier(x) ? 1 : 1.200} />
        </g>
      ))}

      <polygon points="368,337 403,371 368,406" fill="#0b2fb4" />
      <circle cx="368" cy="371" r="25" fill="#fff" stroke="#4f6f8f" strokeWidth="1" />
      <path d="M343 371H393M368 337V406" stroke="#3f5870" strokeWidth="1" />
      <path d="M366 362h4M363 382h10" stroke="#3f5870" strokeWidth="1.300" />

      <path d="M208 186V619" stroke="#333" />
      <path d="M270 186V619" stroke="#8a8a8a" />
      {ticks.map(([x, y]) => <path key={`${x}-${y}`} d={`M${x - 6} ${y - 5}L${x + 4} ${y + 5}`} stroke="#111" strokeWidth="1.500" />)}
      <g fontFamily="Liberation Sans, sans-serif" fontSize="13" fill="#222" textAnchor="middle">
        <text transform="translate(258 238) rotate(-90)">2.50</text>
        <text transform="translate(258 372) rotate(-90)">4.00</text>
        <text transform="translate(258 537) rotate(-90)">4.00</text>
        <text transform="translate(196 402) rotate(-90)">10.50</text>
      </g>
      <rect x="368" y="662" width="38" height="9" fill="#000" />
    </PlanSvg>
  );
}

/* ---------- tree data ---------- */
const tree = [
  { label: 'Structural Plans', kids: ['Level 1 - Analytical', 'Level 2 - Analytical', 'Site', 'ฐานราก', 'พื้นชั้น1', { sel: 'ระดับดินเดิม' }, 'หลังคาเรส'] },
  { label: '3D Views', kids: ['Analytical Model', '{3D}'] },
  { label: 'Elevations (Building Elevation)', kids: ['East', 'North', 'South', 'West'] },
  { label: 'Sections (Building Section)', kids: ['Section 1', 'Section 2', 'Section 3'] },
];
const extras = [['legend', 'Legends'], ['sched', 'Schedules/Quantities (all)'], ['sheets', 'Sheets (all)'], ['family', 'Families']];

const tabs = ['Architecture', 'Structure', 'Steel', 'Systems', 'Insert', 'Annotate', 'Analyze', 'Massing & Site', 'Collaborate', 'View', 'Manage', 'Add-Ins', 'Naviate REX'];

const ItemQ = ({ n, ml, caret }) => (
  <QatItem $ml={ml}><Icon n={n} />{caret && <Caret $ml={3}>▾</Caret>}</QatItem>
);

export default function App() {
  return (
    <Page>
      <Global />
      <Win>
        <TitleBar>
          <Qat>
            <RLogo>R</RLogo>
            <ItemQ n="doc" ml={5} />
            <ItemQ n="folder" ml={12} />
            <ItemQ n="save" ml={7} />
            <ItemQ n="sync" ml={6} caret />
            <ItemQ n="undo" ml={6} caret />
            <ItemQ n="redo" ml={6} caret />
            <ItemQ n="print" ml={6} />
            <ItemQ n="dim" ml={12} caret />
            <ItemQ n="diag" ml={6} />
            <ItemQ n="tag" ml={8} />
            <QatItem $ml={7}><RLogo $c="#333">A</RLogo></QatItem>
            <ItemQ n="cube" ml={11} caret />
            <ItemQ n="eye" ml={6} />
            <ItemQ n="bars" ml={8} />
            <ItemQ n="hide" ml={8} />
            <ItemQ n="windows" ml={8} caret />
            <Caret $ml={6}>▾</Caret>
          </Qat>
          <Title>Autodesk Revit 2020 - STUDENT VERSION - บทที่2 การใส่Dimension และการปรับแต่ง การเขียนแผ่นพื้น.rvt - Structural Plan: ระดับดินเดิม</Title>
          <UserArea>
            <Caret>◂</Caret>
            <QatItem $ml={3}><Icon n="binoc" /></QatItem>
            <Icon n="user" />
            <UserName>eat_2551@hot...</UserName>
            <Caret>▾</Caret>
            <QatItem $ml={5}><Icon n="cart" /></QatItem>
            <QatItem $ml={6}><Icon n="help" /></QatItem>
            <Caret $ml={2}>▾</Caret>
            <WinBtns>
              <Icon n="dash" />
              <Icon n="restore" />
              <X size={11} strokeWidth={2.2} color="#333" />
            </WinBtns>
          </UserArea>
        </TitleBar>

        <TabBar>
          <RTab $file $px={8} $mr={1}>File</RTab>
          {tabs.map(t => <RTab key={t}>{t}</RTab>)}
          <RTab $active $px={5}>Modify | Span Direction Symbol</RTab>
          <RTab $px={16}><Icon n="ctx" /><Caret $ml={1}>▾</Caret></RTab>
        </TabBar>

        <Ribbon>
          <Panel $w={36}>
            <PanelBody>
              <ModifyBtn><Icon n="cursor" /><span>Modify</span></ModifyBtn>
            </PanelBody>
            <PanelLabel>Select ▾</PanelLabel>
          </Panel>
          <Panel $w={43}>
            <PanelBody>
              <PropsCol>
                <Icon n="typeProps" />
                <PropsActive><Icon n="props" /></PropsActive>
              </PropsCol>
            </PanelBody>
            <PanelLabel>Properties</PanelLabel>
          </Panel>
          <Panel $w={48}>
            <PanelBody>
              <PasteBtn><Icon n="paste" /><span>Paste</span><span>▾</span></PasteBtn>
              <SmallGrid $cols={1} $cw={15} $ml={4}>
                <Icon n="scissor" /><Icon n="copy" /><Icon n="match" />
              </SmallGrid>
            </PanelBody>
            <PanelLabel>Clipboard</PanelLabel>
          </Panel>
          <Panel $w={88}>
            <PanelBody>
              <GeomCol>
                <GeomRow><Icon n="cope" />Cope<Caret>▾</Caret></GeomRow>
                <GeomRow><Icon n="cut" />Cut<Caret>▾</Caret></GeomRow>
                <GeomRow><Icon n="join" />Join<Caret>▾</Caret></GeomRow>
              </GeomCol>
              <SmallGrid $cols={2} $cw={16}>
                <Icon n="boxes" /><Icon n="wallJoin" />
                <Icon n="steps" /><Icon n="links" />
                <Icon n="wallCut" /><Icon n="hammer" />
              </SmallGrid>
            </PanelBody>
            <PanelLabel>Geometry</PanelLabel>
          </Panel>
          <Panel $w={154}>
            <PanelBody>
              <BigGrid>
                <Icon n="align" /><Icon n="offset" /><Icon n="mirror1" /><Icon n="mirror2" />
                <Icon n="move" /><Icon n="copyMove" /><Icon n="rotate" /><Icon n="trim" />
              </BigGrid>
              <SmallGrid $cols={3} $cw={16}>
                <Icon n="mini1" /><Icon n="mini1" /><Icon n="miniPin" />
                <Icon n="mini2" /><Icon n="miniOff" /><Icon n="miniSplit" />
                <Icon n="miniArr" /><Icon n="miniArr2" /><Icon n="miniX" />
              </SmallGrid>
            </PanelBody>
            <PanelLabel>Modify</PanelLabel>
          </Panel>
          <Panel $w={39}>
            <PanelBody>
              <SmallGrid $cols={3} $cw={11} $ml={2}>
                <Icon n="bulb" /><Caret>▾</Caret><Icon n="eyeOff" />
                <Icon n="brush" /><Caret>▾</Caret><Icon n="lines" />
                <Icon n="pile" />
              </SmallGrid>
            </PanelBody>
            <PanelLabel>View</PanelLabel>
          </Panel>
          <Panel $w={40}>
            <PanelBody>
              <BigStack $ml={5}>
                <WithCaret><Icon n="ruler" /><Caret>▾</Caret></WithCaret>
                <WithCaret><Icon n="measure" /><Caret>▾</Caret></WithCaret>
              </BigStack>
            </PanelBody>
            <PanelLabel>Measure</PanelLabel>
          </Panel>
          <Panel $w={49} $sep>
            <PanelBody>
              <BigStack $ml={2}><Icon n="createA" /><Icon n="createC" /></BigStack>
              <BigStack $ml={3}><Icon n="createB" /><Icon n="createD" /></BigStack>
            </PanelBody>
            <PanelLabel>Create</PanelLabel>
          </Panel>
          <Panel $w={29} $sep>
            <PanelBody>
              <BigTool $w={29}><BigIconBox><Icon n="editFam" /></BigIconBox>Edit<br />Family</BigTool>
            </PanelBody>
            <PanelLabel>Mode</PanelLabel>
          </Panel>
          <Panel $w={101} $sep>
            <PanelBody>
              <BigTool $w={30}><BigIconBox><Icon n="selHost" /></BigIconBox>Select<br />Host</BigTool>
              <BigTool $w={30} $off><BigIconBox><Icon n="pickHost" /></BigIconBox>Pick New<br />Host</BigTool>
              <BigTool $w={40}><BigIconBox><Icon n="reconcile" /></BigIconBox>Reconcile<br />Hosting</BigTool>
            </PanelBody>
            <PanelLabel>Host</PanelLabel>
          </Panel>
          <Panel $w={52} $sep>
            <PanelBody>
              <BigTool $w={52}><BigIconBox><Icon n="alignPerp" /></BigIconBox>Align<br />Perpendicular</BigTool>
            </PanelBody>
            <PanelLabel>Align Symbol</PanelLabel>
          </Panel>
          <Panel $w={71}>
            <PanelBody>
              <BigTool $w={30}><BigIconBox><Icon n="filter" /></BigIconBox>Filter</BigTool>
              <SelCol>
                <SelRow><Icon n="selSave" />Save</SelRow>
                <SelRow $off><Icon n="selLoad" />Load</SelRow>
                <SelRow><Icon n="selEdit" />Edit</SelRow>
              </SelCol>
            </PanelBody>
            <PanelLabel>Selection</PanelLabel>
          </Panel>
        </Ribbon>
        <ContextBar>Modify | Span Direction Symbol</ContextBar>

        <Main>
          <Side>
            <PaneHeader>Properties<X size={9} strokeWidth={3} color="#333" /></PaneHeader>
            <TypeBox>
              <Preview />
              <TypeName>M_Span Direction<br />One Way Slab</TypeName>
              <Caret $c="#333">▾&nbsp;</Caret>
            </TypeBox>
            <SelectRow>
              <SelectBox>Span Direction Symb<ChevronDown size={8} /></SelectBox>
              <Icon n="editType" />
              <span>Edit Type</span>
            </SelectRow>
            <GroupHead>Graphics<ChevronUp size={8} strokeWidth={3} /></GroupHead>
            <ParamRow><ParamCell $pl={6}>Leader Type</ParamCell><ParamCell $pl={2}>Attached End</ParamCell></ParamRow>
            <PropsBlank />
            <ApplyRow><HelpLink>Properties help</HelpLink><ApplyBtn>Apply</ApplyBtn></ApplyRow>
            <BrowserGap />
            <PaneHeader $h={13}>Project Browser - บทที่2 การใส่Dimen...<X size={9} strokeWidth={3} color="#333" /></PaneHeader>
            <BrowserBody>
              <TreeWrap>
                <Row $stub={0}>
                  <Expander $ml={2} $mr={0} />
                  <RowIcon $ml={4}><Icon n="views" /></RowIcon>
                  <RowText>Views (all)</RowText>
                </Row>
                <Ul $ml={5}>
                  {tree.map(g => (
                    <Li key={g.label}>
                      <Row $stub={14}>
                        <Expander $ml={9} />
                        <RowText>{g.label}</RowText>
                      </Row>
                      <Ul $ml={11.500}>
                        {g.kids.map(k => {
                          const sel = typeof k === 'object';
                          return (
                            <Li key={sel ? k.sel : k}>
                              <Row $stub={22}><RowText $ml={24} $sel={sel}>{sel ? k.sel : k}</RowText></Row>
                            </Li>
                          );
                        })}
                      </Ul>
                    </Li>
                  ))}
                  {extras.map(([ic, t]) => (
                    <Li key={t}>
                      <Row $stub={6}>
                        <RowIcon $ml={6}><Icon n={ic} /></RowIcon>
                        <RowText>{t}</RowText>
                      </Row>
                    </Li>
                  ))}
                </Ul>
              </TreeWrap>
              <VScroll>
                <ChevronUp size={8} strokeWidth={2.500} />
                <VThumb $h={231} $mt={2} />
                <ChevronDown size={8} strokeWidth={2.500} />
              </VScroll>
            </BrowserBody>
            <HScroll>
              <ChevronLeft size={8} strokeWidth={3} />
              <HThumb />
              <ChevronRight size={8} strokeWidth={3} />
            </HScroll>
          </Side>

          <Content>
            <ViewTabs>
              <ViewTab $w={78}><Icon n="plan" />พื้นชั้น 1</ViewTab>
              <ViewTab $w={81}><Icon n="house" />{'{3D}'}</ViewTab>
              <ViewTab $w={79}><Icon n="plan" />ฐานราก</ViewTab>
              <ViewTab $w={82} $ml={7} $active><Icon n="plan" />ระดับดินเดิม<TabClose><X size={9} strokeWidth={3} /></TabClose></ViewTab>
              <TabsMenu>▾</TabsMenu>
            </ViewTabs>
            <CanvasRow>
              <Canvas>
                <Plan />
                <NavBar>
                  <NavDot />
                  <Icon n="navWheel" />
                  <NavCaret>▾</NavCaret>
                  <NavDivider />
                  <Icon n="navZoom" />
                  <NavCaret>▾</NavCaret>
                  <NavDot />
                </NavBar>
              </Canvas>
              <RightScroll>
                <ChevronUp size={9} strokeWidth={3} />
                <RightThumb />
              </RightScroll>
            </CanvasRow>
            <StatusBar>
              <Scale>1 : 100</Scale>
              <StatusIcons>
                <Icon n="thin" /><Icon n="cube" /><Icon n="bulb" /><Icon n="hide" /><Icon n="hide" /><Icon n="cube" /><Icon n="eye" /><Icon n="tag" /><Icon n="plan" /><Icon n="binoc" /><Icon n="hide" />
                <ChevronLeft size={8} strokeWidth={3} />
              </StatusIcons>
              <StatusThumb />
            </StatusBar>
          </Content>
        </Main>
      </Win>
    </Page>
  );
}
